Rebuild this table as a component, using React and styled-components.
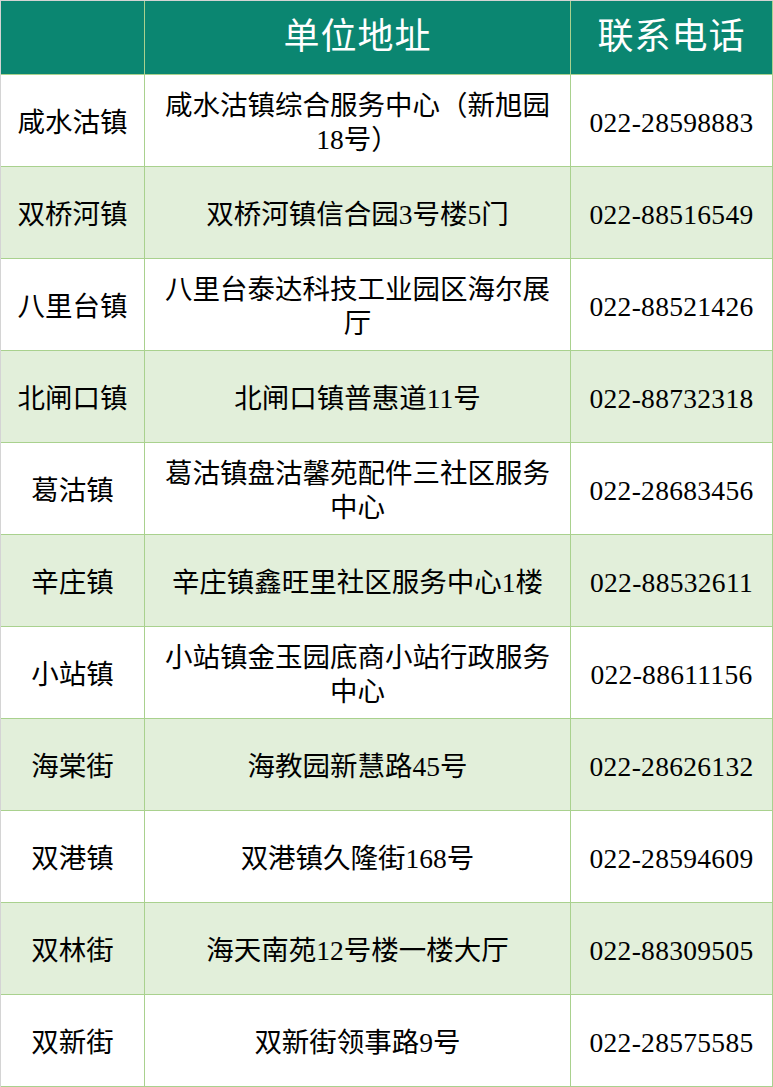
import React from "react";
import styled, { createGlobalStyle } from "styled-components";

const Global = createGlobalStyle`
  html, body { margin: 0; padding: 0; background: #ffffff; }
  body { font-family: "Liberation Serif", "Noto Sans CJK SC", serif; }
`;

const Table = styled.table`
  width: 773px;
  table-layout: fixed;
  border-collapse: separate;
  border-spacing: 0;
  border-top: 1px solid #d4d4d4;
  border-left: 1px solid #d4d4d4;
  font-family: "Liberation Serif", "Noto Sans CJK SC", serif;
  color: #000;
`;

const HeadRow = styled.tr`
  height: 74px;
  background: #0b8671;
`;

const Th = styled.th`
  box-sizing: border-box;
  width: ${(p) => p.$w}px;
  border-right: 1px solid #a9d18e;
  border-bottom: 1px solid #a9d18e;
  color: #ffffff;
  font-weight: 400;
  font-size: 36px;
  line-height: 40px;
  letter-spacing: 1px;
  text-align: center;
  vertical-align: middle;
  padding: 0 0 2px;
`;

const Row = styled.tr`
  height: 92px;
  background: ${(p) => (p.$alt ? "#e2efda" : "#ffffff")};
`;

const Td = styled.td`
  box-sizing: border-box;
  border-right: 1px solid #a9d18e;
  border-bottom: 1px solid #a9d18e;
  font-size: 27.5px;
  line-height: 34px;
  text-align: center;
  vertical-align: middle;
  padding: 4px ${(p) => p.$pad || 0}px 0;
`;

const Phone = styled.span`
  letter-spacing: 0.3px;
`;

const rows = [
  ["咸水沽镇", "咸水沽镇综合服务中心（新旭园18号）", "022-28598883"],
  ["双桥河镇", "双桥河镇信合园3号楼5门", "022-88516549"],
  ["八里台镇", "八里台泰达科技工业园区海尔展厅", "022-88521426"],
  ["北闸口镇", "北闸口镇普惠道11号", "022-88732318"],
  ["葛沽镇", "葛沽镇盘沽馨苑配件三社区服务中心", "022-28683456"],
  ["辛庄镇", "辛庄镇鑫旺里社区服务中心1楼", "022-88532611"],
  ["小站镇", "小站镇金玉园底商小站行政服务中心", "022-88611156"],
  ["海棠街", "海教园新慧路45号", "022-28626132"],
  ["双港镇", "双港镇久隆街168号", "022-28594609"],
  ["双林街", "海天南苑12号楼一楼大厅", "022-88309505"],
  ["双新街", "双新街领事路9号", "022-28575585"],
];

export default function App() {
  return (
    <>
      <Global />
      <Table>
        <thead>
          <HeadRow>
            <Th $w={144}></Th>
            <Th $w={426}>单位地址</Th>
            <Th $w={202}>联系电话</Th>
          </HeadRow>
        </thead>
        <tbody>
          {rows.map((r, i) => (
            <Row key={r[0]} $alt={i % 2 === 1}>
              <Td>{r[0]}</Td>
              <Td $pad={8}>{r[1]}</Td>
              <Td>
                <Phone>{r[2]}</Phone>
              </Td>
            </Row>
          ))}
        </tbody>
      </Table>
    </>
  );
}
